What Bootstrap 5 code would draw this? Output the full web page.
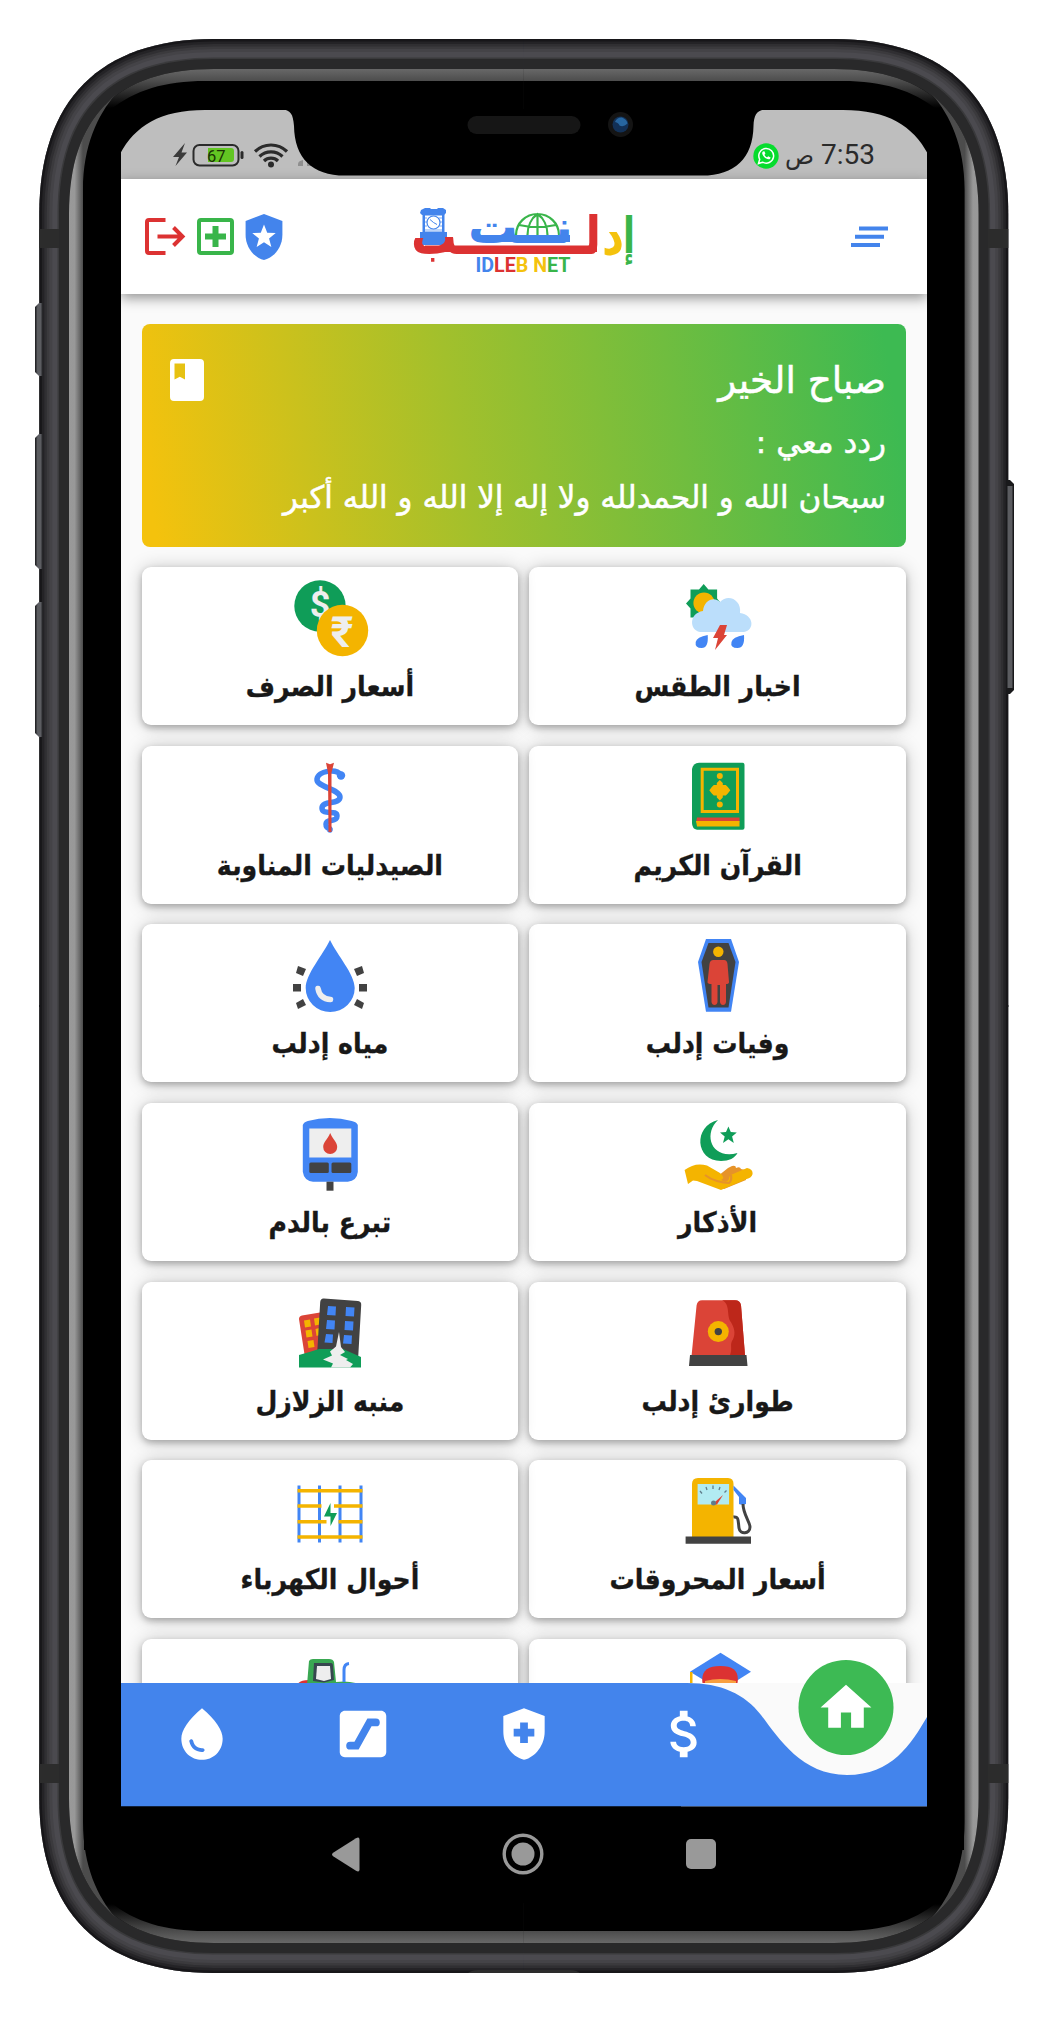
<!DOCTYPE html>
<html lang="ar" dir="rtl">
<head>
<meta charset="utf-8">
<meta name="viewport" content="width=device-width, initial-scale=1">
<title>IDLEB NET</title>
<link href="https://cdn.jsdelivr.net/npm/bootstrap@5.3.0/dist/css/bootstrap.min.css" rel="stylesheet">
<style>
  body{background:#fff;font-family:"DejaVu Sans Condensed","DejaVu Sans",sans-serif;color:#181818;overflow:hidden}
  .phone{width:1048px;height:2025px;padding:110px 121px 0}
  .device-art{top:0;left:0;z-index:0}
  .device-front{top:0;left:0;z-index:5;pointer-events:none}
  .app-screen{width:806px;z-index:1;background:#fafafa}
  .status-bar{height:69px;background:#bebebe;padding:24px 52px 0;color:#2b2b2b}
  .clock{font:28px/42px Roboto,"DejaVu Sans",sans-serif}
  .meridiem{font-size:24px}
  .status-start{gap:6px}
  .app-header{height:115px;background:#fff;padding:0 24px;box-shadow:0 4px 12px rgba(0,0,0,.42);z-index:2}
  .brand-logo{margin-left:125px;margin-right:auto}
  .header-actions{gap:11px}
  .app-main{height:1388.700px;padding:30.3px 21px 0 20.5px;overflow:hidden;background:#fafafa}
  .greeting{height:222.4px;border-radius:8px;margin-bottom:20.3px;padding:27px 20px 0 28px;background:linear-gradient(80deg,#f4c20d 2%,#a2c02c 42%,#3dba52 97%);color:#fff;font-family:"DejaVu Sans",sans-serif;-webkit-text-stroke:.5px #fff}
  .greet-title{font-size:37.300px;line-height:58px}
  .greet-line{font-size:31px;line-height:55px;white-space:nowrap;position:relative;top:6px}
  .tiles{--bs-gutter-x:10.8px;--bs-gutter-y:20.7px}
  .tile{height:158px;border:0;border-radius:9px;box-shadow:0 3px 6px rgba(0,0,0,.24),0 1px 18px rgba(0,0,0,.22);padding-top:5px}
  .tile-name{font-size:28px;font-weight:700;line-height:44px;margin-top:3px;white-space:nowrap;-webkit-text-stroke:.3px #181818}
  .bottom-nav{height:123.3px;z-index:3}
  .nav-shape{left:0;top:0}
  .nav-slots{height:103px}
  .home-btn{width:95px;height:95px;background:#3dba54;top:-23px;left:50%;transform:translateX(-50%)}
  .system-nav{height:97px;padding:0 211px}
</style>
<script src="https://cdn.jsdelivr.net/npm/bootstrap@5.3.0/dist/js/bootstrap.bundle.min.js"></script>
</head>
<body>
<div class="phone position-relative">

  <!-- device body -->
  <svg class="device-art position-absolute" width="1048" height="2025" viewBox="0 0 1048 2025">
    <defs>
      <linearGradient id="gl" gradientUnits="userSpaceOnUse" x1="69" y1="0" x2="83" y2="0"><stop offset="0" stop-color="#999"/><stop offset=".4" stop-color="#989898"/><stop offset="1" stop-color="#4c4c4c"/></linearGradient>
      <linearGradient id="gt" gradientUnits="userSpaceOnUse" x1="0" y1="69" x2="0" y2="108"><stop offset="0" stop-color="#686868"/><stop offset=".31" stop-color="#4c4c4c"/><stop offset="1" stop-color="#000"/></linearGradient>
      <linearGradient id="gb" x1="0" y1="0" x2="1" y2="0"><stop offset="0" stop-color="#19191b"/><stop offset=".35" stop-color="#5d5e63"/><stop offset=".7" stop-color="#5d5e63"/><stop offset="1" stop-color="#19191b"/></linearGradient>
      <path id="outer" d="M39.3 1007V214C39.3 100 100 39 214 39H524.500V1007z"/>
      <clipPath id="co"><use href="#outer"/></clipPath>
      <g id="quarter">
        <use href="#outer" fill="#4b4a4f"/>
        <g clip-path="url(#co)" fill="none" stroke="#0a0a0c">
          <path d="M39.3 1010V214C39.3 100 100 39 214 39H530" stroke-width="26" stroke-opacity=".1"/>
          <path d="M39.3 1010V214C39.3 100 100 39 214 39H530" stroke-width="20" stroke-opacity=".16"/>
          <path d="M39.3 1010V214C39.3 100 100 39 214 39H530" stroke-width="15" stroke-opacity=".22"/>
          <path d="M39.3 1010V214C39.3 100 100 39 214 39H530" stroke-width="10" stroke-opacity=".3"/>
          <path d="M39.3 1010V214C39.3 100 100 39 214 39H530" stroke-width="5" stroke-opacity=".5"/>
        </g>
        <path d="M57.5 1007V214C57.5 110 110 57.5 214 57.5H524.500V1007z" fill="#3a3a3c"/>
        <path d="M59 1007V214C59 111 111 59 214 59H524.500V1007z" fill="#29292a"/>
        <path d="M69 1007V214C69 117 117 69 214 69H524.500V1007z" fill="#000"/>
        <path d="M214 69C165.500 69 129.250 81 105 105L110 110C135 90 165 81 205 81H524.500V69z" fill="url(#gt)"/>
        <path d="M69 1007V214C69 165.500 81 129.250 105 105L115 95C98 115 83 145 83 190V1007z" fill="url(#gl)"/>
        <rect x="39.300" y="229" width="20" height="19" fill="#2c2c2c"/>
      </g>
    </defs>
    <use href="#quarter"/>
    <use href="#quarter" transform="matrix(-1 0 0 1 1047.600 0)"/>
    <use href="#quarter" transform="matrix(1 0 0 -1 0 2012)"/>
    <use href="#quarter" transform="matrix(-1 0 0 -1 1047.600 2012)"/>
    <path fill="url(#gb)" d="M35 307l4-4h4v73h-4l-4-4zM35 438l4-4h4v135h-4l-4-4zM35 606l4-4h4v135h-4l-4-4z"/>
    <path fill="#5b5c60" d="M37 308h4v63h-4zM37 439h4v125h-4zM37 607h4v125h-4z"/>
    <path d="M1006 480h4l4 4v206l-4 4h-4z" fill="#19191b"/><path d="M1007.500 486h5v202h-5z" fill="#5b5c60"/>
    <path d="M468 1973q4-3 10-3h92q6 0 10 3z" fill="#2c2c2c"/>
    <path d="M84 1700h880v150H84z" fill="#000"/>
  </svg>

  <div class="app-screen position-relative">
    <div class="status-bar d-flex align-items-start justify-content-between">
      <div class="status-start d-flex align-items-center">
        <span class="clock">7:53 <span class="meridiem">ص</span></span>
        <svg width="26" height="26" viewBox="0 0 26 26"><circle cx="13" cy="13" r="12.700" fill="#06dc2d"/><path d="M5.500 20.500l1.200-4.200a7.400 7.400 0 1 1 2.800 2.900z" fill="none" stroke="#fff" stroke-width="1.500"/><path d="M10 8.500c-3 2 3 9.500 7 7.500l.6-1.600-2.300-1.200-1.200 1.100c-1.300-.5-2-1.300-2.600-2.600l.9-1.200-1-2.200z" fill="#fff"/></svg>
      </div>
      <svg width="142" height="42" viewBox="0 0 142 42">
        <path d="M12 9L0 23h6L2.500 32 14 18.500H8.500z" fill="#3a3a3a"/>
        <rect x="20.500" y="11" width="45" height="20.500" rx="6" fill="none" stroke="#2b2b2b" stroke-width="2"/>
        <path d="M35 14h23q3 0 3 3v8q0 3-3 3H35z" fill="#62c522"/><rect x="67.500" y="17" width="3" height="8" rx="1.500" fill="#2b2b2b"/>
        <text x="34" y="27.500" direction="ltr" font-family="Roboto" font-size="16.500" fill="#1b3305">67</text>
        <g fill="none" stroke="#2b2b2b" stroke-width="3.200"><path d="M82 17.500a23 23 0 0 1 32 0"/><path d="M86.500 22.500a16.500 16.500 0 0 1 23 0" /><path d="M91 27a10 10 0 0 1 14 0"/></g><circle cx="98" cy="30.500" r="3" fill="#2b2b2b"/>
        <path d="M125 32v-2q0-3 5-4v6zM134 32v-8h5v8z" fill="#8f8f8f"/>
      </svg>
    </div>

    <header class="app-header position-relative d-flex align-items-center">
      <svg width="66" height="40" viewBox="0 0 66 40" fill="#4384ec"><path d="M22 9.500h29v4H22zM18 17.700h29v4H18zM14 26h29v4H14z"/></svg>
      <svg class="brand-logo" width="230" height="84" viewBox="408 194 230 84" direction="ltr" font-family="DejaVu Sans">
        <path d="M425 251h172v-6.500H425z" fill="#dc3232"/>
        <path d="M480 241h90v-7h-90z" fill="#4384ec"/>
        <g fill="#4384ec">
          <path d="M421 209l4-2h5l1 1h6l1-1h5l3 2v3l-2 2h-22l-2-2z"/><path d="M422.500 213h22v19h-22z"/><path d="M420 231h27v13h-27z"/>
        </g>
        <path d="M425 214.500h17v16h-17z" fill="#fff"/><path stroke="#4384ec" stroke-width=".7" d="M424 217h3m12 0h3M424 221h3m12 0h3M424 225h3m12 0h3M424 229h18"/><circle cx="433.500" cy="221.500" r="6.500" fill="#fff" stroke="#4384ec" stroke-width="1.200"/><path d="M430 218.500l3.500 3 3.500 2" stroke="#4384ec" stroke-width="1" fill="none"/>
        <path fill="none" stroke="#39b54a" stroke-width="2.200" d="M516 234a21.500 21 0 0 1 43 0M537.500 213v21M527.500 234c0-9 4-17 10-21 6 4 10 12 10 21M519 224q18 4 37 0"/>
        <text x="411" y="253" font-weight="700" font-size="52" fill="#dc3232" textLength="190" lengthAdjust="spacingAndGlyphs">لــــــــب</text>
        <text x="468" y="242" font-weight="700" font-size="46" fill="#4384ec" textLength="105" lengthAdjust="spacingAndGlyphs">نــت</text>
        <text x="602" y="253" font-weight="700" font-size="54" fill="#f4c20d" textLength="22" lengthAdjust="spacingAndGlyphs">د</text>
        <text x="623" y="252" font-weight="700" font-size="50" fill="#39b54a" textLength="12" lengthAdjust="spacingAndGlyphs">إ</text>
        <text x="475.500" y="270.500" font-family="Roboto" font-weight="700" font-size="19.500" textLength="95" lengthAdjust="spacingAndGlyphs"><tspan fill="#4384ec">ID</tspan><tspan fill="#dc3232">LE</tspan><tspan fill="#f4c20d">B N</tspan><tspan fill="#39b54a">ET</tspan></text>
      </svg>
      <div class="header-actions d-flex align-items-center">
        <svg width="38" height="46" viewBox="4 2 16 20"><path fill="#4384ec" d="M12 2L4 5v6.090c0 5.050 3.410 9.760 8 10.910 4.590-1.150 8-5.860 8-10.910V5z"/><path fill="#fff" d="M12 6.600l1.400 3.500 3.700.2-2.900 2.400 1 3.600-3.200-2-3.200 2 1-3.600-2.900-2.400 3.700-.2z"/></svg>
        <svg width="37" height="37" viewBox="0 0 37 37"><rect x="2" y="2" width="33" height="33" rx="2" fill="none" stroke="#39b54a" stroke-width="4"/><path d="M15.500 8h6v7.500H29v6h-7.500V29h-6v-7.500H8v-6h7.500z" fill="#39b54a"/></svg>
        <svg width="41" height="37" viewBox="0 0 41 37" fill="none" stroke="#dc3232" stroke-width="4"><path d="M20.500 2H4Q2 2 2 4v29q0 2 2 2h16.500M12.500 18.500h26M28.500 9.500l9 9-9 9"/></svg>
      </div>
    </header>

    <main class="app-main">
      <section class="greeting d-flex justify-content-between align-items-start">
        <div>
          <div class="greet-title">صباح الخير</div>
          <div class="greet-line">ردد معي :</div>
          <div class="greet-line">سبحان الله و الحمدلله ولا إله إلا الله و الله أكبر</div>
        </div>
        <svg class="mt-2" width="34" height="42" viewBox="0 0 34 42"><path fill="#fff" stroke="none" fill-rule="evenodd" d="M4 0h26q4 0 4 4v34q0 4-4 4H4q-4 0-4-4V4q0-4 4-4zM4.500 4.500v16l5.300-2.700 5.200 2.700v-16z"/></svg>
      </section>

      <div class="row tiles">
        <div class="col-6"><div class="card tile align-items-center">
          <svg width="90" height="90" viewBox="0 0 90 90"><path fill="#0f9d58" d="M30.700 12l4.700 5.600h8.700v9l4 5-4 5v9H17.500v-9l-4.500-5 4.500-5v-9h8.500z"/><circle cx="31" cy="31" r="10.600" fill="#f4b400"/><path fill="#bbdefb" d="M27 60c-11-2-11-19 3-21 1-11 11-15 17-9 8-9 22-2 20 11 14 2 15 17 4 19z"/><path fill="#db4437" d="M47 53h7l-3 10h3L42 78l3-12h-5z"/><path fill="#4285f4" d="M34.700 63q1 13-6 13t-6-6q1-5 12-7zM71 63q1 13-6.500 13t-6-6q1-5 12.500-7z"/></svg>
          <div class="tile-name">اخبار الطقس</div></div></div>
        <div class="col-6"><div class="card tile align-items-center">
          <svg width="90" height="90" viewBox="0 0 90 90" font-family="Roboto" font-weight="700" fill="#eee" text-anchor="middle"><circle cx="35" cy="34" r="25.700" fill="#0f9d58"/><text x="35" y="45" font-size="36">$</text><circle cx="57.500" cy="58.500" r="25.700" fill="#f4b400"/><text x="57" y="74.500" font-size="43">₹</text></svg>
          <div class="tile-name">أسعار الصرف</div></div></div>

        <div class="col-6"><div class="card tile align-items-center">
          <svg width="90" height="90" viewBox="0 0 90 90"><path fill="#0f9d58" d="M26 11.700h43.500q2 0 2 2v63q0 2-2 2H24q-5-1-5-7V18q1-6 7-6.300z"/><path fill="none" stroke="#f4b400" stroke-width="3" d="M29.200 18.200h35.300v42.300H29.200z"/><path fill="#f4b400" d="M46.800 29l3 3v2h3l2 2 2.500 3.300-2.500 3.300-2 2h-3v2l-3 3-3-3v-2h-3l-2-2-2.500-3.300 2.500-3.300 2-2h3v-2z"/><circle cx="46.800" cy="25" r="3" fill="#f4b400"/><circle cx="46.800" cy="53.500" r="3" fill="#f4b400"/><path fill="#db4437" d="M24 66.500h42.500v5H23z"/><path fill="#f4b400" d="M23 70h43.500v5.500H24z"/></svg>
          <div class="tile-name">القرآن الكريم</div></div></div>
        <div class="col-6"><div class="card tile align-items-center">
          <svg width="90" height="90" viewBox="0 0 90 90"><path fill="none" stroke="#4285f4" stroke-width="5.500" stroke-linecap="round" d="M56 24C51 17 33 20 32 28 31 36 55 38 55 46S37 49 37 57 52 58 52 65 41 67 41 73 46 76 45 79"/><path fill="#db4437" d="M41 11.700l4 1.500 4-1.500-2.500 10L46.500 81h-3l-.5-59z"/><circle cx="56" cy="24.500" r="4.200" fill="#4285f4"/></svg>
          <div class="tile-name">الصيدليات المناوبة</div></div></div>

        <div class="col-6"><div class="card tile align-items-center">
          <svg width="90" height="90" viewBox="0 0 90 90"><path fill="#4285f4" d="M33 10h25l8 23-8 49.700H33L25 33z"/><path fill="#424242" d="M35.500 14h20L62.500 33l-7 45.500h-20L28.500 33z"/><circle cx="45.300" cy="22.700" r="5.200" fill="#f4b400"/><path fill="#db4437" d="M40 31h11q3 0 3.500 4l1.500 18q0 2-3 2v18q-.5 3-3 3t-3-3V56h-2.500v17q-.5 3-3 3t-3-3V55q-4 0-4-2l2-18q.5-4 4-4z"/></svg>
          <div class="tile-name">وفيات إدلب</div></div></div>
        <div class="col-6"><div class="card tile align-items-center">
          <svg width="90" height="90" viewBox="0 0 90 90"><path fill="#4285f4" d="M45 11C52 26 69.700 45 69.700 59a24.500 24 0 0 1-49 0C20.700 45 38 26 45 11z"/><path fill="none" stroke="#eee" stroke-width="5.500" stroke-linecap="round" d="M33 59.500c1 6 5 10.500 12.500 11"/><path fill="#424242" d="M8 55h8v7.500H8zM74 55h8v7.500h-8zM13 37l8 3-3 7-7-3zM77 37l-8 3 3 7 7-3zM13 80l8-4-3-6-7 4zM77 80l-8-4 3-6 7 4z"/></svg>
          <div class="tile-name">مياه إدلب</div></div></div>

        <div class="col-6"><div class="card tile align-items-center">
          <svg width="90" height="90" viewBox="0 0 90 90"><path fill="#0f9d58" d="M45 12C20 18 22 53 48 53c8 0 14-3 16.500-8C38 52 30 26 45 12z"/><path fill="#0f9d58" d="M55.400 18.500l2.400 5.600 6 .3-4.700 4 1.700 6.500-5.400-3.700-5.400 3.700 1.700-6.500-4.700-4 6-.3z"/><path fill="#e69329" d="M45 68l10-8 4-2q4-1 4 2 4-2 5 1l4 1 1 10-22 9-16-8z"/><path fill="#f4b400" d="M11.600 62Q22 54 34 57.500L47 65q6 5 1 7 6 4 8-1 0-4 4-5l14-6q6 1 5.600 6-1 4-6 5L48 82 24 73l-4-.5-5 3.500z"/><path fill="none" stroke="#e69329" stroke-width="2.200" d="M32 67q5 4 12 6t12 2q3-2 2-8"/></svg>
          <div class="tile-name">الأذكار</div></div></div>
        <div class="col-6"><div class="card tile align-items-center">
          <svg width="90" height="90" viewBox="0 0 90 90"><path fill="#4285f4" d="M17.800 17q1-3 5-4 22-6 44 0 5 1 6 4v47q-1 9-10 9.700H28q-9-1-10.200-10z"/><path fill="#eee" d="M24.300 20.500h42v29h-42z"/><path fill="#db4437" d="M45.200 25c3 7 7 9 7 14a6.900 7 0 0 1-14 0c0-5 4-7 7-14z"/><g fill="#424242"><rect x="24.300" y="54.500" width="19.500" height="10.500" rx="1.500"/><rect x="46.500" y="54.500" width="19.800" height="10.500" rx="1.500"/><path d="M41.500 73.700h7v9h-7z"/></g></svg>
          <div class="tile-name">تبرع بالدم</div></div></div>

        <div class="col-6"><div class="card tile align-items-center">
          <svg width="90" height="90" viewBox="0 0 90 90"><path fill="#db4437" d="M29 13.300h33q5 0 6 5l4 50H18.600l5-50q1-5 5.400-5z"/><path fill="#bd271a" d="M49 13.300h13q5 0 6 5l4 50H57c3-8-1-10 3-16 3-6 1-12-2-17-5-6 0-18-9-22z"/><circle cx="45.300" cy="44.600" r="10.500" fill="#f4b400"/><circle cx="45.300" cy="44.600" r="3.700" fill="#424242"/><path fill="#424242" d="M17 68h56.500l1 11H16z"/></svg>
          <div class="tile-name">طوارئ إدلب</div></div></div>
        <div class="col-6"><div class="card tile align-items-center">
          <svg width="90" height="90" viewBox="0 0 90 90"><path fill="#db4437" d="M17 28.500l18-3 2 45H20L14 32q0-3 3-3.500z"/><path fill="#f4b400" d="M19 33.500l6-1 1 7-6 1zM29 31.500l6-1v7l-5 1zM20.500 43.500l6-1 1 7-6 1zM30.500 42l4-1v7l-3 1zM22.500 54l6-1 1 7-6 1z"/><path fill="#424242" d="M39 11.500l34 2.500q3.500.5 3.200 4l-3 52-41-4 3-51q.5-4 3.800-3.500z"/><path fill="#4285f4" d="M43 19l8 .5-.5 9-8.500-.5zM61 20l8.500.5-.5 9-8.500-.5zM42 33l8 .5-.5 9-8.500-.5zM60 34l8.500.5-.5 9L59.500 43zM41 47l7 .5-.5 8.500-8-.5zM59 48l8 .5-.5 8.500-8.500-.5z"/><path fill="#0f9d58" d="M14 68q11-3 20-6h24l18 8v10.600H14z"/><path fill="#eee" d="M54 45l2 15 4 5-5 3 8 4-2 1 7 4-3 3.600H46l2-4-10-4 9-4-2-4 6-5z"/></svg>
          <div class="tile-name">منبه الزلازل</div></div></div>

        <div class="col-6"><div class="card tile align-items-center">
          <svg width="90" height="90" viewBox="0 0 90 90"><path fill="#f4b400" d="M25 13h30q5.500 0 5.500 6v53H19V19q0-6 6-6z"/><path fill="#b2ebf2" d="M24.600 19h31.500v20.400H24.600z"/><path stroke="#607d8b" stroke-width="1.300" d="M27 26l2 2.500M33 22l1 3M40 20.500V24M47 22l-1 3M53.500 25.500l-2 2"/><path fill="#db4437" d="M50 30l-6 9.400h-5z"/><circle cx="40.500" cy="38" r="2.500" fill="#607d8b"/><path fill="#4285f4" d="M60.500 20.500L73 33v6q-5 1-7 0v-7l-5.500-7z"/><path fill="none" stroke="#424242" stroke-width="3" d="M70 39c0 10 7 18 7 23 0 7-10 8-11 1-1-7 0-12-5.500-11"/><path fill="#424242" d="M12.600 71.500H78v7.200H12.600z"/></svg>
          <div class="tile-name">أسعار المحروقات</div></div></div>
        <div class="col-6"><div class="card tile align-items-center">
          <svg width="90" height="90" viewBox="0 0 90 90"><path stroke="#4285f4" stroke-width="3" d="M14 20.400v57M34.500 20.400v57M55 20.400v57M76 20.400v57"/><path stroke="#f4b400" stroke-width="3.400" d="M12.500 25.700h65M12.500 41h24M49 41h28.500M12.500 56.700h29M53.500 56.700h24M12.500 72h65"/><path fill="#0f9d58" d="M45.500 38v10H52l-6.500 13V51.500H39z"/></svg>
          <div class="tile-name">أحوال الكهرباء</div></div></div>

        <div class="col-6"><div class="card tile align-items-center">
          <svg width="90" height="90" viewBox="0 0 90 90"><path fill="#4285f4" d="M47.500 8.700L78 27.700l-30 19-31-19z"/><path fill="#dc3232" d="M30 42c-3-14 3-20 17.500-20S67 28 64 42z"/><path fill="#f9a03f" d="M32 37q15-4 31 0v10H32z"/><path fill="#f4b400" d="M17 28h2.500v14H17z"/></svg></div></div>
        <div class="col-6"><div class="card tile align-items-center">
          <svg width="90" height="90" viewBox="0 0 90 90"><path fill="#dc3232" d="M12 42q1-6 12-6v6z"/><path fill="#39a852" d="M24 17q1-2 4-2h16q4 0 5 3l2 20q14-2 25 3H22z"/><path fill="#37474f" d="M29 19h17q2 0 2 3l1 14-10 2.500L28 37z"/><path fill="#eee" d="M32 22h13l1 13-7 2-8-2z"/><path fill="none" stroke="#4285f4" stroke-width="3" d="M59 38V26q0-6 5-6.500"/></svg></div></div>
      </div>
    </main>

    <nav class="bottom-nav position-relative">
      <svg class="nav-shape position-absolute" width="806" height="124" viewBox="0 0 806 124"><path fill="#fafafa" d="M560 0h246v123.300H560z"/><path fill="#4384ec" d="M0 0H566C600 0 624 11 640 32C657 54 680 92 726 92C771 92 790 61 806 34V123.300H0z"/></svg>
      <div class="nav-slots position-relative row g-0 align-items-center">
        <div class="col h-100 position-relative"><a href="#" class="home-btn position-absolute rounded-circle d-flex align-items-center justify-content-center"><svg width="61" height="61" viewBox="0 0 24 24" fill="#fff"><path d="M10 20v-6h4v6h5v-8h3L12 3 2 12h3v8z"/></svg></a></div>
        <div class="col text-center"><svg width="62" height="62" viewBox="0 0 24 24" fill="#fff"><path d="M11.800 10.900c-2.270-.59-3-1.200-3-2.150 0-1.090 1.010-1.850 2.700-1.850 1.780 0 2.440.85 2.500 2.100h2.210c-.07-1.720-1.120-3.300-3.210-3.810V3h-3v2.160c-1.940.42-3.500 1.680-3.500 3.610 0 2.310 1.910 3.460 4.700 4.130 2.500.6 3 1.480 3 2.410 0 .69-.49 1.790-2.700 1.790-2.060 0-2.870-.92-2.980-2.100h-2.200c.12 2.190 1.760 3.420 3.680 3.830V21h3v-2.150c1.950-.37 3.500-1.500 3.500-3.550 0-2.840-2.430-3.810-4.700-4.400z"/></svg></div>
        <div class="col text-center"><svg width="62" height="62" viewBox="0 0 24 24" fill="#fff"><path fill-rule="evenodd" d="M10.500 13H8v-3h2.500V7.500h3V10H16v3h-2.500v2.500h-3V13zM12 2L4 5v6.090c0 5.050 3.410 9.760 8 10.910 4.590-1.150 8-5.860 8-10.910V5l-8-3z"/></svg></div>
        <div class="col text-center"><svg width="62" height="62" viewBox="0 0 24 24" fill="#fff"><path fill-rule="evenodd" d="M19 3H5c-1.100 0-2 .9-2 2v14c0 1.100.9 2 2 2h14c1.100 0 2-.9 2-2V5c0-1.100-.9-2-2-2zM17 9h-1.700l-5 9H7a1.500 1.500 0 0 1 0-3h1.700l5-9H17a1.500 1.500 0 0 1 0 3z"/></svg></div>
        <div class="col text-center"><svg width="62" height="62" viewBox="0 0 24 24" fill="#fff"><path fill-rule="evenodd" d="M12 2c-5.330 4.550-8 8.480-8 11.800 0 4.980 3.800 8.200 8 8.200s8-3.220 8-8.200c0-3.320-2.670-7.250-8-11.800zm-4.170 12c.37 0 .67.26.74.6.41 2.210 2.280 2.980 3.640 2.870.43-.02.79.32.79.75 0 .4-.32.73-.72.75-2.130.13-4.620-1.090-5.190-4.120-.08-.43.28-.85.740-.85z"/></svg></div>
      </div>
    </nav>

    <div class="system-nav bg-black d-flex align-items-center justify-content-between">
      <svg width="30" height="30" viewBox="0 0 30 30"><rect width="30" height="30" rx="5" fill="#999"/></svg>
      <svg width="42" height="42" viewBox="0 0 42 42"><circle cx="21" cy="21" r="18.800" fill="none" stroke="#999" stroke-width="3.400"/><circle cx="21" cy="21" r="11.500" fill="#999"/></svg>
      <svg width="28" height="35" viewBox="0 0 28 35"><path d="M1.500 15.500L24 1.200q3.500-2 3.500 1.500v29.600q0 3.500-3.500 1.500L1.500 19.500q-3-2 0-4z" fill="#999"/></svg>
    </div>
  </div>

  <!-- notch and display corners -->
  <svg class="device-front position-absolute" width="1048" height="190" viewBox="0 0 1048 190">
    <path d="M281 109C291 110 293 114 294 126C294.500 158 312 175.600 345 175.600H702C735 175.600 753 158 753.500 126C754 114 757 110 767 109z"/>
    <path d="M120 154C135 126 160 110 205 110V109H120zM928 154C913 126 888 110 843 110V109H928z"/>
    <rect x="467.500" y="116" width="113" height="18" rx="9" fill="#161616"/>
    <circle cx="620.500" cy="124.500" r="12.500" fill="#141414"/><circle cx="620.500" cy="124.500" r="8" fill="#123056"/><path d="M615 122q2-5 7-4.500 5 2 5.500 6-4 4-8 2-1-3-4.500-3.500z" fill="#2766a0"/>
  </svg>
</div>
</body>
</html>
